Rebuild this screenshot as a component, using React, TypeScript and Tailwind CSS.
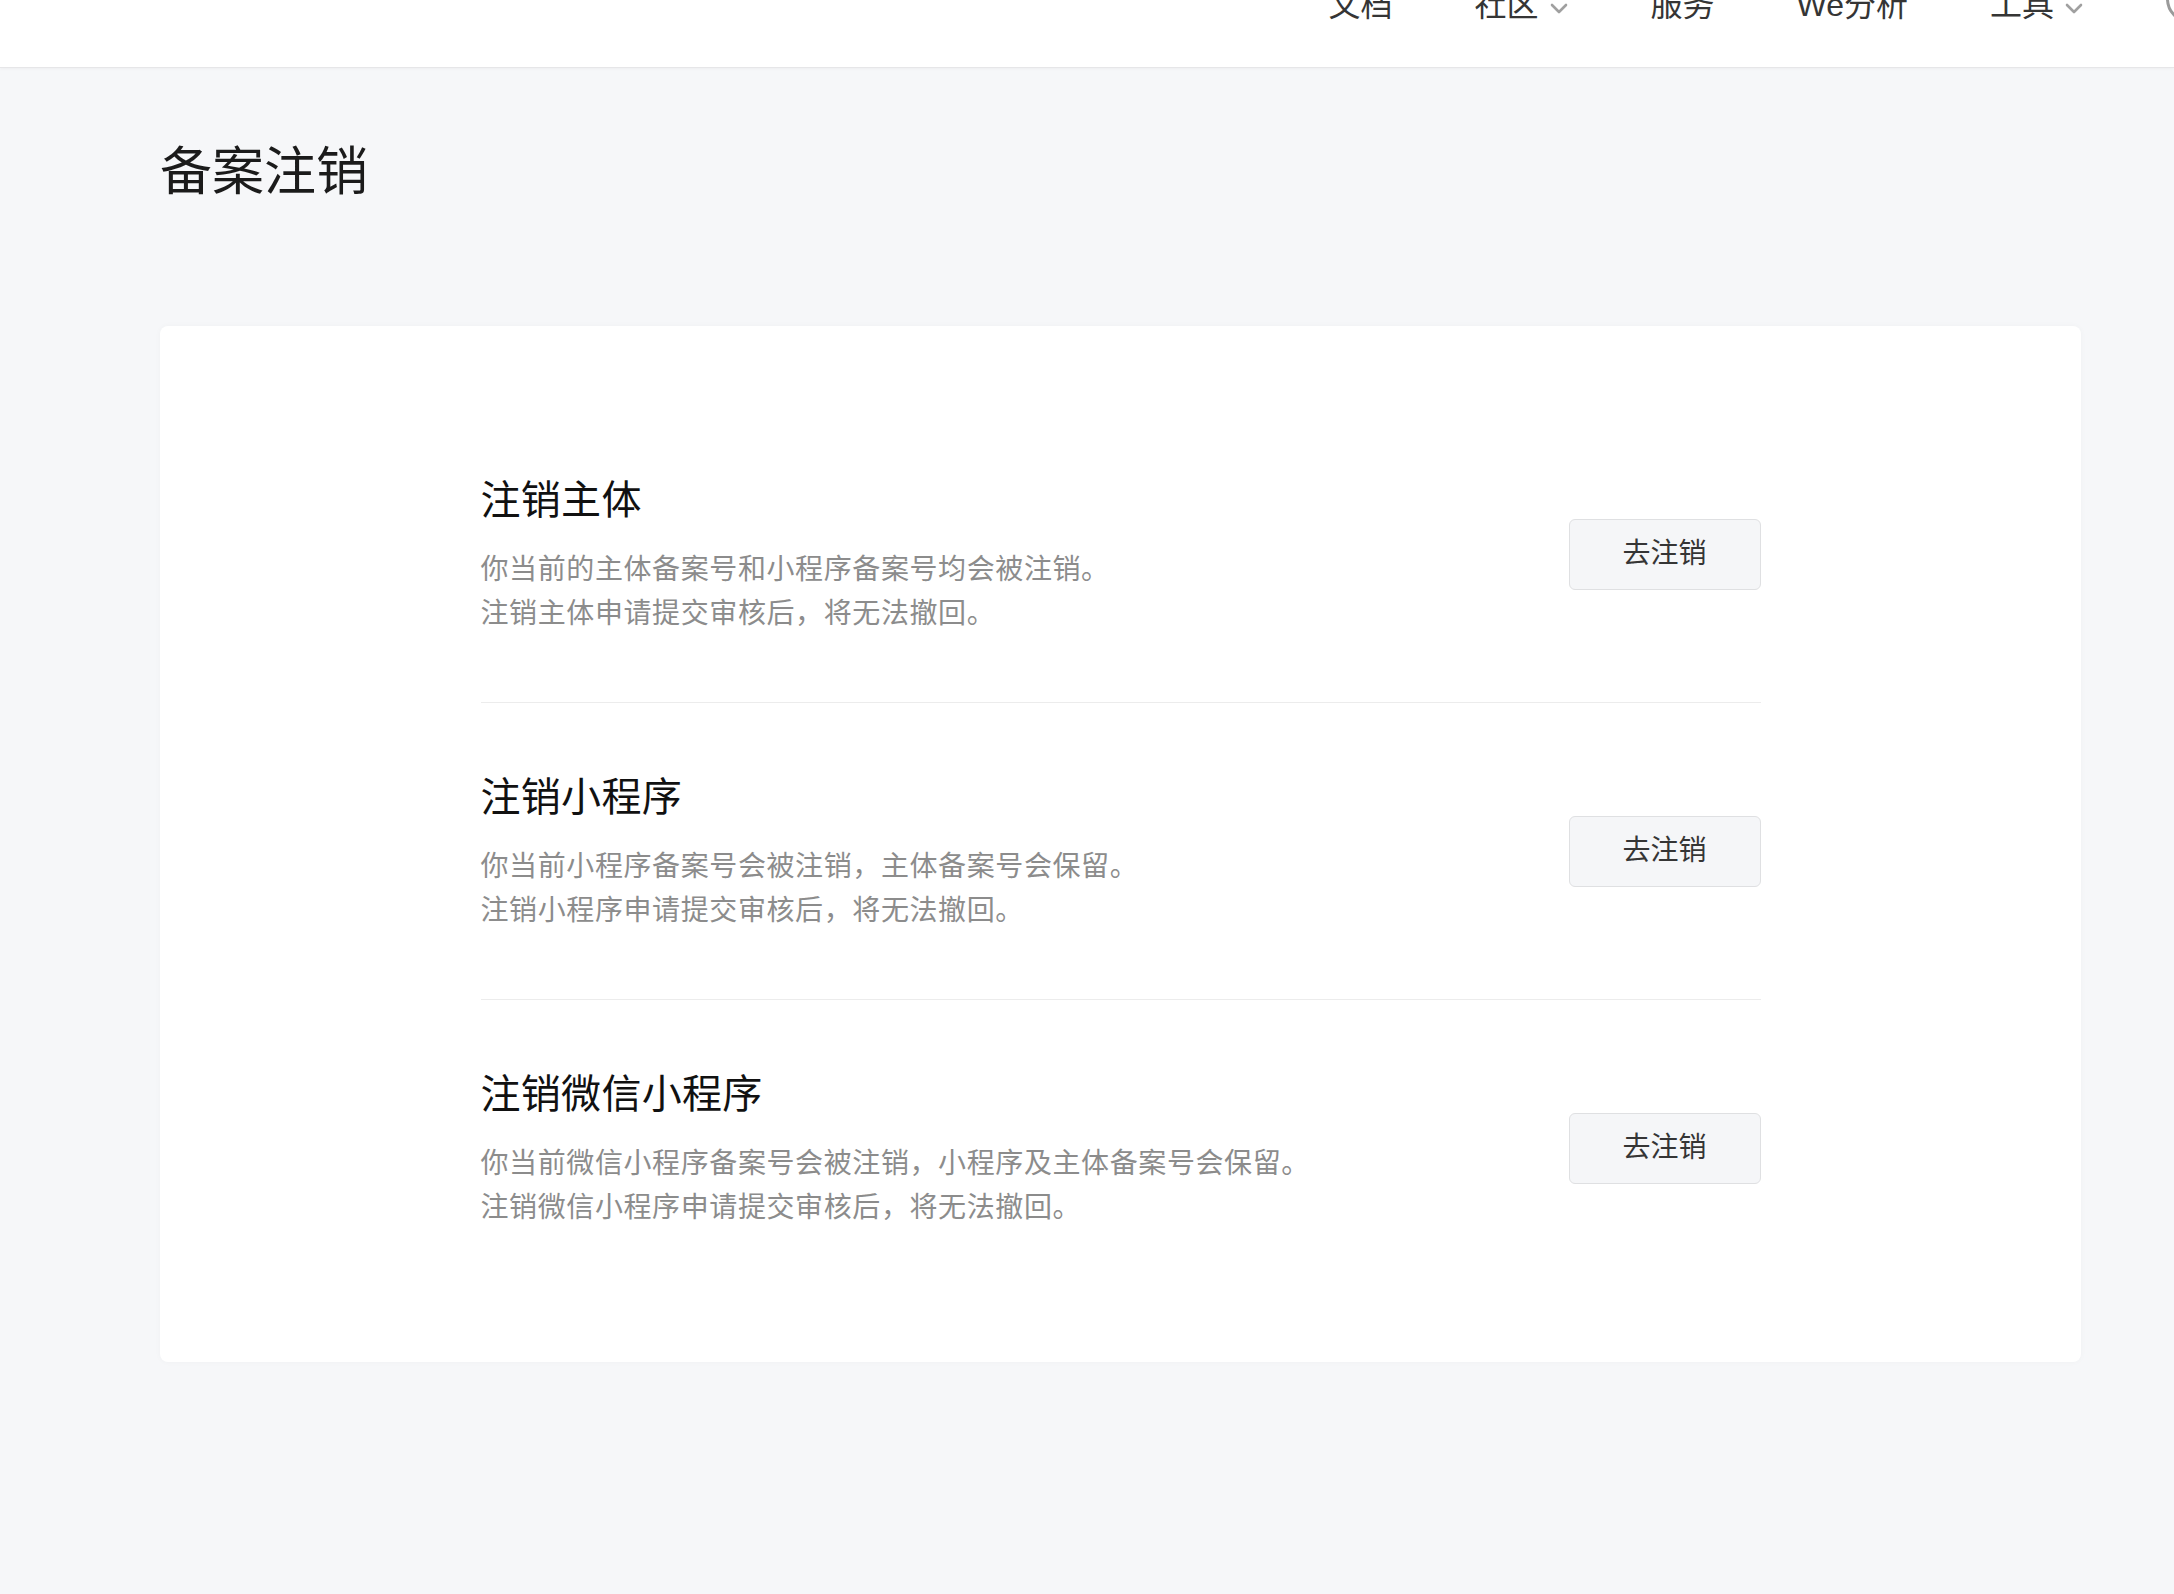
const FONT = '"Liberation Sans", "Noto Sans CJK SC", "Noto Sans", sans-serif';

const sections = [
  {
    title: "注销主体",
    lines: ["你当前的主体备案号和小程序备案号均会被注销。", "注销主体申请提交审核后，将无法撤回。"],
  },
  {
    title: "注销小程序",
    lines: ["你当前小程序备案号会被注销，主体备案号会保留。", "注销小程序申请提交审核后，将无法撤回。"],
  },
  {
    title: "注销微信小程序",
    lines: [
      "你当前微信小程序备案号会被注销，小程序及主体备案号会保留。",
      "注销微信小程序申请提交审核后，将无法撤回。",
    ],
  },
];

function Chevron() {
  return (
    <svg width="20" height="12" viewBox="0 0 20 12" className="mt-[8px]" fill="none">
      <path d="M3 2l7 7 7-7" stroke="#a0a0a0" strokeWidth="2.6" strokeLinecap="round" strokeLinejoin="round" />
    </svg>
  );
}

function NavItem({ label, dropdown }: { label: string; dropdown?: boolean }) {
  return (
    <div className="flex items-center gap-[10px] text-[32px] leading-[44px] text-[#353535]">
      <span>{label}</span>
      {dropdown && <Chevron />}
    </div>
  );
}

export default function App() {
  return (
    <div className="min-h-screen bg-[#f6f7f9]" style={{ fontFamily: FONT }}>
      {/* top bar, scrolled so only the bottom of the nav is visible */}
      <header className="h-[68px] overflow-hidden bg-white border-b border-[#e6e6e8] shadow-[0_1px_3px_rgba(0,0,0,0.04)]">
        <nav className="flex justify-end items-start gap-[82px] mt-[-17px] mr-[-40px]">
          <NavItem label="文档" />
          <NavItem label="社区" dropdown />
          <NavItem label="服务" />
          <NavItem label="We分析" />
          <NavItem label="工具" dropdown />
          <div className="w-[48px] h-[48px] mt-[-8px] rounded-full border-[3px] border-[#9a9a9a]" />
        </nav>
      </header>

      <main className="pl-[160px] pb-[234px]">
        <h1 className="mt-[68px] text-[52px] leading-[72px] text-[#1b1b1b]">备案注销</h1>

        <div className="mt-[118px] w-[1921px] rounded-[8px] bg-white pt-[80px] pb-[66px] shadow-[0_0_6px_rgba(0,0,0,0.03)]">
          <div className="mx-auto w-[1280px]">
            {sections.map((s, i) => (
              <div
                key={s.title}
                className={`flex items-center justify-between py-[66px] ${
                  i < sections.length - 1 ? "border-b-[1.5px] border-[#ececec]" : ""
                }`}
              >
                <div>
                  <h2 className="text-[40px] leading-[56px] tracking-[0.3px] text-[#111]">{s.title}</h2>
                  <div className="mt-[20px] text-[28px] leading-[44px] tracking-[0.6px] text-[#8c8c8c]">
                    {s.lines.map((l) => (
                      <p key={l}>{l}</p>
                    ))}
                  </div>
                </div>
                <button className="w-[192px] h-[71px] rounded-[6px] border-[1.5px] border-[#dfe0e2] bg-[#f5f6f8] text-[28px] text-[#353535]">
                  去注销
                </button>
              </div>
            ))}
          </div>
        </div>
      </main>
    </div>
  );
}
